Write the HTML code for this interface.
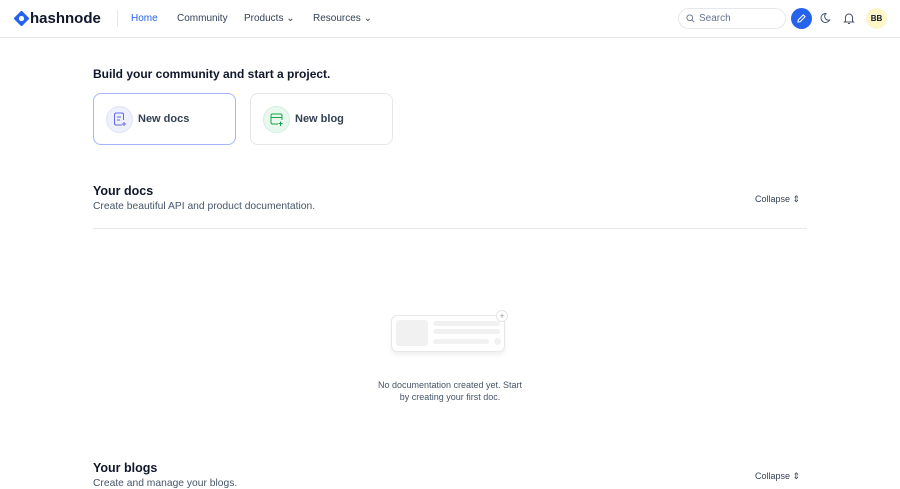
<!DOCTYPE html>
<html><head><style>
*{box-sizing:border-box;margin:0;padding:0}
body{width:900px;height:484px;overflow:hidden;background:#fff;font-family:"Liberation Sans",sans-serif;color:#1e293b;position:relative}
.abs{position:absolute}
.nav{position:absolute;left:0;top:0;width:900px;height:38px;border-bottom:1px solid #e5e7eb}
.nl{font-size:10px;color:#334155;top:13px}
.card{position:absolute;top:93px;width:143px;height:52px;border-radius:8px;border:1px solid #e5e7eb}
.ic{position:absolute;left:12px;top:12px;width:27px;height:27px;border-radius:50%}
.cl{position:absolute;left:44px;top:19px;font-size:11px;font-weight:bold;color:#334155}
.h2{font-size:12px;font-weight:bold;color:#0f172a}
.sub{font-size:10.3px;color:#475569}
.col{font-size:9px;color:#334155}
</style></head><body>
<div class="nav">
<svg class="abs" style="left:14px;top:11px" width="15" height="15" viewBox="0 0 16 16"><path d="M8 0.5L15.5 8 8 15.5 0.5 8Z" fill="#2563eb" stroke="#2563eb" stroke-linejoin="round" stroke-width="1.5"/><circle cx="8" cy="8" r="2.8" fill="#fff"/></svg>
<div class="abs" style="left:30px;top:10px;font-size:15px;font-weight:bold;color:#0f172a">hashnode</div>
<div class="abs" style="left:117px;top:10px;width:1px;height:17px;background:#e5e7eb"></div>
<div class="abs nl" style="left:131px;color:#2563eb">Home</div>
<div class="abs nl" style="left:177px">Community</div>
<div class="abs nl" style="left:244px">Products ⌄</div>
<div class="abs nl" style="left:313px">Resources ⌄</div>
<div class="abs" style="left:678px;top:8px;width:108px;height:21px;border:1px solid #e5e7eb;border-radius:11px"></div>
<svg class="abs" style="left:686px;top:14px" width="9" height="9" viewBox="0 0 10 10"><circle cx="4.2" cy="4.2" r="3.2" fill="none" stroke="#64748b" stroke-width="1"/><path d="M6.6 6.6L9 9" stroke="#64748b"/></svg>
<div class="abs" style="left:699px;top:13px;font-size:10px;color:#64748b">Search</div>
<div class="abs" style="left:791px;top:8px;width:21px;height:21px;border-radius:50%;background:#2563eb"></div>
<svg class="abs" style="left:796px;top:13px" width="11" height="11" viewBox="0 0 12 12"><path d="M2 10L2.5 7.5 8 2 10 4 4.5 9.5Z" fill="none" stroke="#fff" stroke-width="1.1" stroke-linejoin="round"/></svg>
<svg class="abs" style="left:819px;top:12px" width="12" height="12" viewBox="0 0 12 12"><path d="M7 1.5A4.5 4.5 0 1 0 10.5 8 3.8 3.8 0 0 1 7 1.5Z" fill="none" stroke="#475569" stroke-width="1"/></svg>
<svg class="abs" style="left:843px;top:12px" width="12" height="13" viewBox="0 0 12 13"><path d="M2.5 9V5.5a3.5 3.5 0 0 1 7 0V9l1 1H1.5Z M5 11.5h2" fill="none" stroke="#475569" stroke-width="1"/></svg>
<div class="abs" style="left:866px;top:8px;width:21px;height:21px;border-radius:50%;background:#fdf6c8;font-size:8px;font-weight:bold;text-align:center;line-height:21px;color:#0f172a">BB</div>
</div>
<div class="abs h2" style="left:93px;top:67px">Build your community and start a project.</div>
<div class="card" style="left:93px;border-color:#a5b4fc">
<div class="ic" style="background:#eef0fb;border:1px solid #dfe3f8"></div>
<svg class="abs" style="left:19px;top:18px" width="14" height="15" viewBox="0 0 14 15"><path d="M9 13H3a1.5 1.5 0 0 1-1.5-1.5V2.5A1.5 1.5 0 0 1 3 1h6a1.5 1.5 0 0 1 1.5 1.5V8 M4 5h4M4 8h3M11 10v4M9 12h4" fill="none" stroke="#6366f1" stroke-width="1"/></svg>
<div class="cl">New docs</div></div>
<div class="card" style="left:250px">
<div class="ic" style="background:#e8f8ee;border:1px solid #d1f0dc"></div>
<svg class="abs" style="left:19px;top:19px" width="14" height="14" viewBox="0 0 14 14"><path d="M8 11H2.5A1.5 1.5 0 0 1 1 9.5v-7A1.5 1.5 0 0 1 2.5 1h8A1.5 1.5 0 0 1 12 2.5V7 M1 4.5h11M10.5 8.5v4.5M8.5 10.5h4" fill="none" stroke="#16a34a" stroke-width="1"/></svg>
<div class="cl">New blog</div></div>
<div class="abs h2" style="left:93px;top:184px;font-size:12.5px">Your docs</div>
<div class="abs sub" style="left:93px;top:201px">Create beautiful API and product documentation.</div>
<div class="abs col" style="left:755px;top:194px">Collapse ⇕</div>
<div class="abs" style="left:93px;top:228px;width:714px;height:1px;background:#e5e7eb"></div>
<div class="abs" style="left:391px;top:315px;width:114px;height:37px;border:1px solid #e7e7e7;border-radius:6px;box-shadow:0 3px 4px #f0f0f0"></div>
<div class="abs" style="left:396px;top:320px;width:32px;height:26px;background:#f1f1f1;border-radius:3px"></div>
<div class="abs" style="left:433px;top:321px;width:67px;height:5px;background:#f1f1f1;border-radius:3px"></div>
<div class="abs" style="left:433px;top:329px;width:67px;height:5px;background:#f1f1f1;border-radius:3px"></div>
<div class="abs" style="left:433px;top:339px;width:56px;height:5px;background:#f1f1f1;border-radius:3px"></div>
<div class="abs" style="left:494px;top:338px;width:7px;height:7px;background:#f1f1f1;border-radius:50%"></div>
<div class="abs" style="left:496px;top:310px;width:12px;height:12px;background:#fff;border:1px solid #e5e5e5;border-radius:50%;font-size:9px;color:#999;text-align:center;line-height:10px">+</div>
<div class="abs" style="left:350px;top:379px;width:200px;text-align:center;font-size:9px;line-height:12px;color:#475569">No documentation created yet. Start<br>by creating your first doc.</div>
<div class="abs h2" style="left:93px;top:461px;font-size:12.5px">Your blogs</div>
<div class="abs sub" style="left:93px;top:478px">Create and manage your blogs.</div>
<div class="abs col" style="left:755px;top:471px">Collapse ⇕</div>
</body></html>
